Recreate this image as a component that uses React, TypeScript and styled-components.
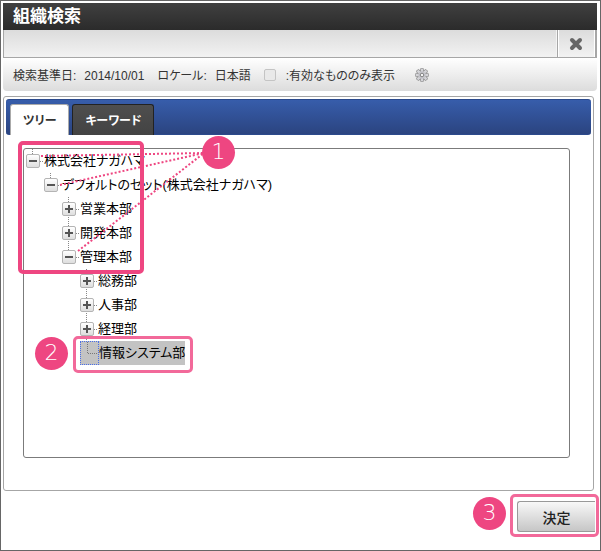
import React, { useState } from "react";
import styled, { createGlobalStyle, css } from "styled-components";

const PINK = "#ee4681";
const PINK_SOFT = "#f2699a";

const GlobalStyle = createGlobalStyle`
  *, *::before, *::after { box-sizing: border-box; }
  body {
    margin: 0;
    background: #fff;
    color: #000;
    font-family: "Liberation Sans", "Noto Sans CJK JP", sans-serif;
    font-size: 13px;
    font-feature-settings: "palt";
  }
  button, input { font: inherit; font-feature-settings: inherit; margin: 0; }
`;

const Window = styled.main`
  display: flex;
  flex-direction: column;
  min-height: 100vh;
  padding: 2px 3px 14px 2px;
  border: 1px solid #666;
`;

const TitleBar = styled.h1`
  margin: 0;
  padding: 0 10px;
  background: linear-gradient(#404040, #2b2b2b);
  color: #fff;
  font-size: 17px;
  font-weight: 700;
  line-height: 27px;
`;

const Toolbar = styled.div`
  display: flex;
  justify-content: flex-end;
  height: 28px;
  border: 1px solid #a6a6a6;
  border-top: 0;
  border-right-width: 2px;
  background: linear-gradient(#dcdcdc, #f2f2f2);
`;

const CloseButton = styled.button`
  display: flex;
  align-items: center;
  justify-content: center;
  width: 38px;
  padding: 0 2px 0 0;
  border: solid #a6a6a6;
  border-width: 0 0 0 1px;
  background: none;
  box-shadow: inset 1px 0 #fff, inset -1px 0 #fff, -1px 0 #f4f4f4;
`;

const InfoBar = styled.div`
  display: flex;
  align-items: center;
  height: 33px;
  padding: 0 10px;
  border-radius: 0 0 4px 4px;
  background: linear-gradient(#fff, #dcdcdc);
  color: #333;
  font-size: 12px;
  white-space: nowrap;
`;

const Field = styled.span`
  display: flex;
  align-items: baseline;
  gap: 8px;
  margin-right: 13px;
`;

const CheckLabel = styled.label`
  display: flex;
  align-items: center;
  gap: 10px;
  margin-right: 20px;
`;

const CheckBox = styled.input`
  appearance: none;
  width: 12px;
  height: 12px;
  border: 1px solid #c4c4c4;
  border-radius: 2px;
  background: #e9e9e9;
  &:checked { background: #999; }
`;

const GearButton = styled.button`
  display: flex;
  padding: 0;
  border: 0;
  background: none;
`;

const Panel = styled.section`
  margin: 5px 3px 0 0;
  padding: 2px 2px 32px;
  border: 1px solid #a6a6a6;
  border-radius: 3px;
`;

const TabBar = styled.div`
  display: flex;
  align-items: flex-end;
  gap: 3px;
  height: 36px;
  padding: 0 4px;
  border: 1px solid #2c4a8c;
  border-width: 1px 0;
  border-radius: 3px;
  background: linear-gradient(#375dab, #2b4480);
`;

const Tab = styled.button<{ $active: boolean }>`
  height: 31px;
  margin-bottom: -1px;
  padding: 0 12px 2px;
  border: 1px solid #222;
  border-bottom: 0;
  border-radius: 3px 3px 0 0;
  background: linear-gradient(#4e4e4e, #434343);
  color: #fff;
  font-size: 12px;
  font-weight: 700;
  ${(p) =>
    p.$active &&
    css`
      border-color: #aaa;
      background: #fff;
      color: #333;
    `}
`;

const TreeFrame = styled.div`
  position: relative;
  min-height: 310px;
  margin: 13px 21px 0 17px;
  padding: 0 2px;
  border: 1px solid #7b7b7b;
  border-radius: 3px;
`;

const TreeList = styled.ul<{ $nested?: boolean }>`
  margin: 0;
  padding: 0 0 0 ${(p) => (p.$nested ? 18 : 0)}px;
  list-style: none;
`;

const Row = styled.div<{ $selected?: boolean }>`
  display: flex;
  align-items: center;
  width: max-content;
  height: 24px;
  line-height: 24px;
  white-space: nowrap;
  background: ${(p) => (p.$selected ? "#c3c3c3" : "transparent")};
`;

const Joint = styled.span<{ $below: boolean }>`
  display: flex;
  flex: none;
  align-items: center;
  width: 18px;
  height: 24px;
  background:
    linear-gradient(#888 50%, transparent 50%) 6px 0 / 1px 2px repeat-y,
    linear-gradient(90deg, #888 50%, transparent 50%) 14px 12px / 2px 1px repeat-x;
  ${(p) =>
    !p.$below &&
    css`
      background:
        linear-gradient(#fff, #fff) 6px 19px / 1px 5px no-repeat,
        linear-gradient(#888 50%, transparent 50%) 6px 0 / 1px 2px repeat-y,
        linear-gradient(90deg, #888 50%, transparent 50%) 14px 12px / 2px 1px repeat-x;
    `}
`;

const LeafJoint = styled.span`
  display: flex;
  flex: none;
  width: 19px;
  height: 24px;
  border: 1px dotted #4a6fe8;
`;

const Toggle = styled.button`
  display: flex;
  align-items: center;
  justify-content: center;
  width: 14px;
  height: 14px;
  padding: 0;
  border: 1px solid #b4b4b4;
  border-radius: 2px;
  background: linear-gradient(#fff, #dedede);
`;

const NodeLink = styled.a`
  color: #000;
  text-decoration: none;
`;

const Footer = styled.footer`
  display: flex;
  justify-content: flex-end;
  padding: 10px 2px 0 0;
`;

const SubmitArea = styled.div`
  position: relative;
`;

const SubmitButton = styled.button`
  width: 78px;
  height: 31px;
  padding: 0;
  border: 1px solid #999;
  border-right: 0;
  border-radius: 3px 0 0 3px;
  background: linear-gradient(#f8f8f8, #c6c6c6);
  color: #222;
  font-size: 14px;
  font-weight: 500;
`;

const Outline = styled.div<{ $x: number; $y: number; $w: number; $h: number; $soft?: boolean }>`
  position: absolute;
  left: ${(p) => p.$x}px;
  top: ${(p) => p.$y}px;
  width: ${(p) => p.$w}px;
  height: ${(p) => p.$h}px;
  border: ${(p) => (p.$soft ? `3px solid ${PINK_SOFT}` : `4px solid ${PINK}`)};
  border-radius: 5px;
  pointer-events: none;
`;

const Marker = styled.span<{ $x: number; $y: number }>`
  position: absolute;
  left: ${(p) => p.$x}px;
  top: ${(p) => p.$y}px;
  width: 33px;
  height: 33px;
  border-radius: 50%;
  background: ${PINK};
  color: #fff;
  font-family: "DejaVu Sans", sans-serif;
  font-size: 22px;
  font-weight: 200;
  line-height: 32px;
  text-align: center;
`;

const Leaders = styled.svg`
  position: absolute;
  left: 0;
  top: 0;
  pointer-events: none;
`;

type TreeNode = { name: string; open?: boolean; leaf?: boolean; children?: TreeNode[] };

const TREE: TreeNode[] = [
  {
    name: "株式会社ナガハマ",
    open: true,
    children: [
      {
        name: "デフォルトのセット(株式会社ナガハマ)",
        open: true,
        children: [
          { name: "営業本部" },
          { name: "開発本部" },
          {
            name: "管理本部",
            open: true,
            children: [
              { name: "総務部" },
              { name: "人事部" },
              { name: "経理部" },
              { name: "情報システム部", leaf: true },
            ],
          },
        ],
      },
    ],
  },
];

function Branch({ nodes, nested }: { nodes: TreeNode[]; nested?: boolean }) {
  return (
    <TreeList $nested={nested}>
      {nodes.map((node, i) => (
        <li key={node.name}>
          <Row $selected={node.leaf}>
            {node.leaf ? (
              <LeafJoint>
                <svg width="17" height="22" fill="none" stroke="#777" strokeDasharray="1 1">
                  <path d="M6.5 0V11.5H17" />
                </svg>
              </LeafJoint>
            ) : (
              <Joint $below={i < nodes.length - 1}>
                <Toggle type="button" aria-label={node.name}>
                  <svg width="8" height="8" stroke="#555" strokeWidth="2">
                    <path d={node.open ? "M0 4H8" : "M0 4H8M4 0V8"} />
                  </svg>
                </Toggle>
              </Joint>
            )}
            <NodeLink href="#">{node.name}</NodeLink>
          </Row>
          {node.children && <Branch nodes={node.children} nested />}
        </li>
      ))}
    </TreeList>
  );
}

function GearIcon() {
  const teeth = [0, 45, 90, 135, 180, 225, 270, 315];
  return (
    <svg width="14" height="14" viewBox="0 0 14 14">
      {teeth.map((a) => (
        <rect key={a} x="5.4" y="0.3" width="3.2" height="4.4" rx="1.2" fill="#d4d4d8" stroke="#858585" strokeWidth="0.8" transform={`rotate(${a} 7 7)`} />
      ))}
      <circle cx="7" cy="7" r="3.8" fill="#c6c6cc" />
      <circle cx="7" cy="7" r="1.8" fill="#f4f4f4" stroke="#808080" />
    </svg>
  );
}

export default function App() {
  const [tab, setTab] = useState(0);
  return (
    <>
      <GlobalStyle />
      <Window>
        <TitleBar>組織検索</TitleBar>
        <Toolbar>
          <CloseButton type="button" aria-label="閉じる">
            <svg width="14" height="14" viewBox="0 0 14 14" stroke="#666" strokeWidth="4" strokeLinecap="round" fill="none">
              <path d="M3 3L11 11M11 3L3 11" />
            </svg>
          </CloseButton>
        </Toolbar>
        <InfoBar>
          <Field>
            <span>検索基準日:</span>
            <span>2014/10/01</span>
          </Field>
          <Field>
            <span>ロケール:</span>
            <span>日本語</span>
          </Field>
          <CheckLabel>
            <CheckBox type="checkbox" />
            <span>:有効なもののみ表示</span>
          </CheckLabel>
          <GearButton type="button" aria-label="設定">
            <GearIcon />
          </GearButton>
        </InfoBar>
        <Panel>
          <TabBar role="tablist">
            {["ツリー", "キーワード"].map((label, i) => (
              <Tab key={label} type="button" role="tab" aria-selected={tab === i} $active={tab === i} onClick={() => setTab(i)}>
                {label}
              </Tab>
            ))}
          </TabBar>
          <TreeFrame>
            <Branch nodes={TREE} />
            <Outline $x={-6} $y={-8} $w={126} $h={133} />
            <Leaders width="200" height="120" stroke={PINK} strokeWidth="2" strokeDasharray="2 2" fill="none">
              <path d="M17 7L180 4" />
              <path d="M36 36L180 4" />
              <path d="M54 102L180 4" />
            </Leaders>
            <Marker $x={178} $y={-13}>1</Marker>
            <Outline $soft $x={49} $y={187} $w={120} $h={37} />
            <Marker $x={11} $y={188}>2</Marker>
          </TreeFrame>
        </Panel>
        <Footer>
          <SubmitArea>
            <SubmitButton type="button">決定</SubmitButton>
            <Outline $soft $x={-7} $y={-7} $w={89} $h={43} />
            <Marker $x={-44} $y={-4}>3</Marker>
          </SubmitArea>
        </Footer>
      </Window>
    </>
  );
}
